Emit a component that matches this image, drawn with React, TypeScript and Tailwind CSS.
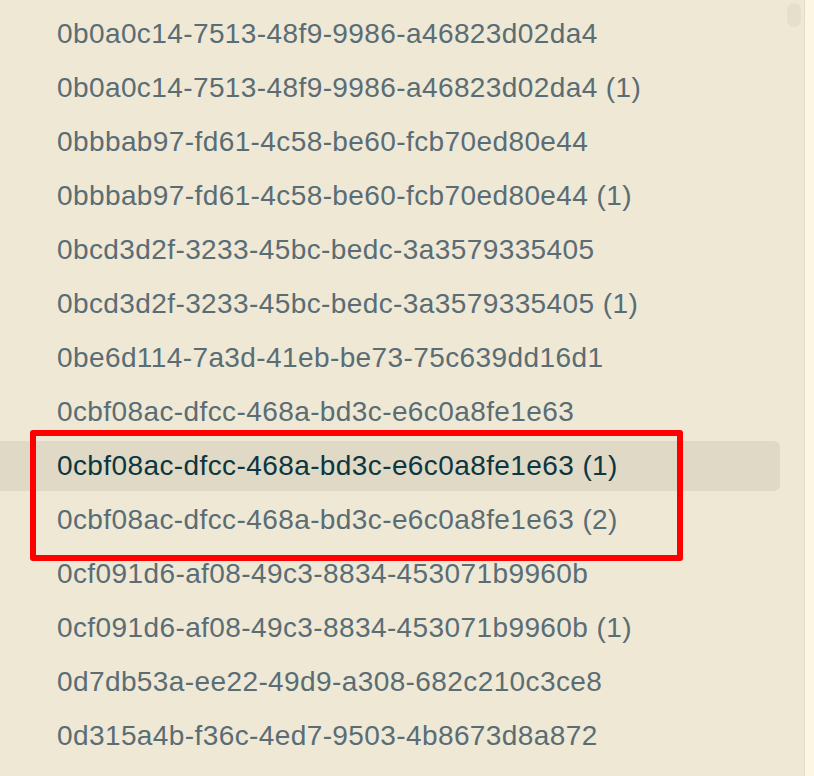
import * as React from "react";

const files: string[] = [
  "0b0a0c14-7513-48f9-9986-a46823d02da4",
  "0b0a0c14-7513-48f9-9986-a46823d02da4 (1)",
  "0bbbab97-fd61-4c58-be60-fcb70ed80e44",
  "0bbbab97-fd61-4c58-be60-fcb70ed80e44 (1)",
  "0bcd3d2f-3233-45bc-bedc-3a3579335405",
  "0bcd3d2f-3233-45bc-bedc-3a3579335405 (1)",
  "0be6d114-7a3d-41eb-be73-75c639dd16d1",
  "0cbf08ac-dfcc-468a-bd3c-e6c0a8fe1e63",
  "0cbf08ac-dfcc-468a-bd3c-e6c0a8fe1e63 (1)",
  "0cbf08ac-dfcc-468a-bd3c-e6c0a8fe1e63 (2)",
  "0cf091d6-af08-49c3-8834-453071b9960b",
  "0cf091d6-af08-49c3-8834-453071b9960b (1)",
  "0d7db53a-ee22-49d9-a308-682c210c3ce8",
  "0d315a4b-f36c-4ed7-9503-4b8673d8a872",
];

const SELECTED = 8;

const App: React.FC = () => {
  return (
    <div
      className="relative flex h-[776px] w-[814px] overflow-hidden bg-[#eee8d5]"
      style={{ fontFamily: '"Liberation Sans", Arial, sans-serif' }}
    >
      {/* file list */}
      <div className="relative flex-1 border-r border-[#e2dbc6]">
        <ul className="w-[780px] pt-[7px]">
          {files.map((name, i) => (
            <li key={i} className="flex h-[54px] items-center py-[2px]">
              <div
                className={
                  "flex h-full w-full items-center rounded-r-md pl-[57px] text-[28px] tracking-[0.4px] " +
                  (i === SELECTED
                    ? "bg-[#dfd9c5] text-[#0b3642]"
                    : "text-[#5a6d75]")
                }
              >
                {name}
              </div>
            </li>
          ))}
        </ul>

        {/* scrollbar thumb */}
        <div className="absolute right-[3px] top-[3px] h-[24px] w-[14px] rounded-full bg-[#e5dfcc]" />
      </div>

      {/* side strip */}
      <div className="w-[9px] bg-[#fdf6e3]" />

      {/* annotation box */}
      <div className="absolute left-[30px] top-[430px] h-[131px] w-[653px] rounded-[3px] border-[6px] border-[#ff0000]" />
    </div>
  );
};

export default App;
